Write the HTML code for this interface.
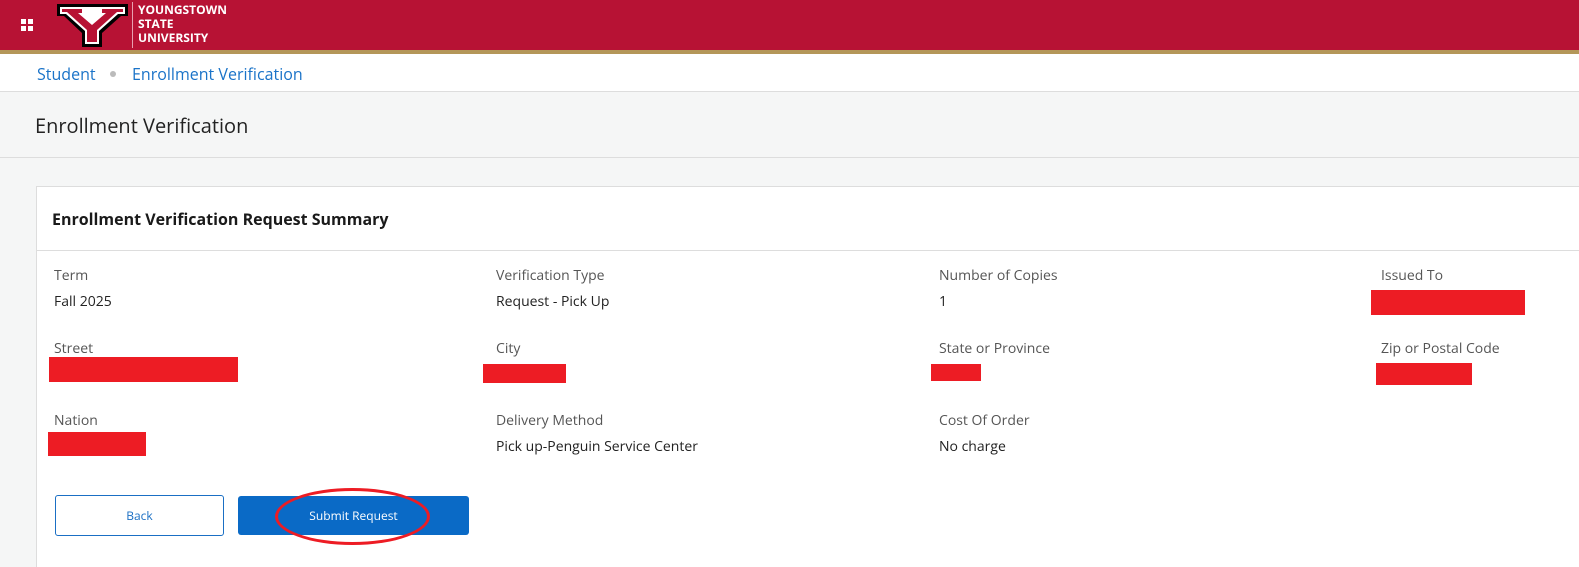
<!DOCTYPE html>
<html style="overflow:hidden;width:1579px;height:567px"><head><style>
*{margin:0;padding:0;box-sizing:border-box}
body{width:1579px;height:567px;overflow:hidden;background:#f5f6f6;font-family:"Open Sans","Liberation Sans",sans-serif;position:relative}
.a{position:absolute;white-space:nowrap}
.lbl{font-size:14px;color:#555}
.val{font-size:14px;color:#222}
.red{position:absolute;background:#ed1c24}
</style></head><body>
<div class="a" style="left:0;top:0;width:1579px;height:50px;background:#b71234"></div>
<div class="a" style="left:0;top:50px;width:1579px;height:4px;background:#b49759"></div>
<div class="a" style="left:21px;top:19px;width:5px;height:5px;background:#fff"></div>
<div class="a" style="left:28px;top:19px;width:5px;height:5px;background:#fff"></div>
<div class="a" style="left:21px;top:26px;width:5px;height:5px;background:#fff"></div>
<div class="a" style="left:28px;top:26px;width:5px;height:5px;background:#fff"></div>
<svg class="a" style="left:56px;top:3px" width="73" height="45" viewBox="0 0 73 45">
<path d="M1 1H72V13H65L46 30V44H26V30L8 13H1Z" fill="#000"/>
<path d="M4 4H69V11H62L43 28V41H29V28L10 11H4Z" fill="#fff"/>
<path d="M6 6H26V10H22L36 22L50 10H46V6H67V9H61L41 27V39H31V27L11 9H6Z" fill="#b71234"/>
</svg>
<div class="a" style="left:132px;top:2px;width:1px;height:46px;background:#e8a0b0"></div>
<div class="a" style="left:138px;top:3px;color:#fff;font-weight:bold;font-size:12px;line-height:14px">YOUNGSTOWN<br>STATE<br>UNIVERSITY</div>
<div class="a" style="left:0;top:54px;width:1579px;height:38px;background:#fff;border-bottom:1px solid #ddd"></div>
<div class="a" style="left:37px;top:63px;font-size:16px;color:#1a73c8">Student</div>
<div class="a" style="left:110px;top:71px;width:6px;height:6px;border-radius:3px;background:#bbb"></div>
<div class="a" style="left:132px;top:63px;font-size:16px;color:#1a73c8">Enrollment Verification</div>
<div class="a" style="left:35px;top:112px;font-size:20px;color:#222">Enrollment Verification</div>
<div class="a" style="left:0;top:157px;width:1579px;height:1px;background:#ddd"></div>
<div class="a" style="left:36px;top:186px;width:1560px;height:400px;background:#fff;border:1px solid #ddd"></div>
<div class="a" style="left:37px;top:250px;width:1560px;height:1px;background:#ddd"></div>
<div class="a" style="left:52px;top:208px;font-size:16px;font-weight:bold;color:#1a1a1a">Enrollment Verification Request Summary</div>

<div class="a lbl" style="left:54px;top:266px">Term</div>
<div class="a val" style="left:54px;top:292px">Fall 2025</div>
<div class="a lbl" style="left:496px;top:266px">Verification Type</div>
<div class="a val" style="left:496px;top:292px">Request - Pick Up</div>
<div class="a lbl" style="left:939px;top:266px">Number of Copies</div>
<div class="a val" style="left:939px;top:292px">1</div>
<div class="a lbl" style="left:1381px;top:266px">Issued To</div>
<div class="red" style="left:1371px;top:290px;width:154px;height:25px"></div>

<div class="a lbl" style="left:54px;top:339px">Street</div>
<div class="red" style="left:49px;top:357px;width:189px;height:25px"></div>
<div class="a lbl" style="left:496px;top:339px">City</div>
<div class="red" style="left:483px;top:364px;width:83px;height:19px"></div>
<div class="a lbl" style="left:939px;top:339px">State or Province</div>
<div class="red" style="left:931px;top:364px;width:50px;height:17px"></div>
<div class="a lbl" style="left:1381px;top:339px">Zip or Postal Code</div>
<div class="red" style="left:1376px;top:363px;width:96px;height:22px"></div>

<div class="a lbl" style="left:54px;top:411px">Nation</div>
<div class="red" style="left:48px;top:432px;width:98px;height:24px"></div>
<div class="a lbl" style="left:496px;top:411px">Delivery Method</div>
<div class="a val" style="left:496px;top:437px">Pick up-Penguin Service Center</div>
<div class="a lbl" style="left:939px;top:411px">Cost Of Order</div>
<div class="a val" style="left:939px;top:437px">No charge</div>

<div class="a" style="left:55px;top:495px;width:169px;height:41px;border:1px solid #1a6fc4;border-radius:3px;color:#1a6fc4;font-size:12px;text-align:center;line-height:39px">Back</div>
<div class="a" style="left:238px;top:496px;width:231px;height:39px;background:#0a6ac6;border-radius:3px;color:#fff;font-size:12px;text-align:center;line-height:39px">Submit Request</div>
<div class="a" style="left:275px;top:488px;width:155px;height:57px;border:3px solid #ed1c24;border-radius:50%"></div>
</body></html>
